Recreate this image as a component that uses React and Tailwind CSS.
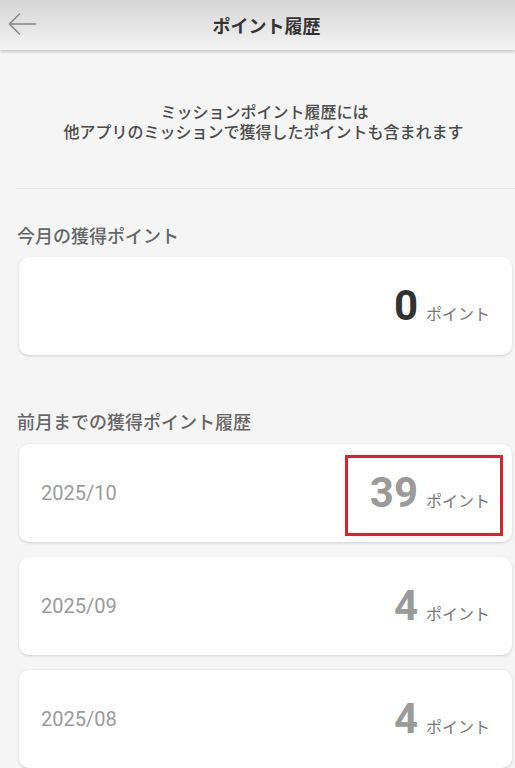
import React from "react";

const history = [
  { month: "2025/10", points: 39, marked: true },
  { month: "2025/09", points: 4 },
  { month: "2025/08", points: 4 },
];

const jp = "font-['Noto_Sans_CJK_JP','Noto_Sans',sans-serif]";
const num = "font-['Roboto','Liberation_Sans',sans-serif]";

// Points value + unit, number centred, unit on its baseline
const Points = ({ value, dark }) => (
  <div className="flex items-baseline">
    <span className={`${num} text-[42px] font-bold leading-none ${dark ? "text-[#333]" : "text-[#9a9a9a]"}`}>
      {value}
    </span>
    <span className={`${jp} ml-2 text-[16px] text-[#777]`}>ポイント</span>
  </div>
);

export default function App() {
  return (
    <div className={`min-h-screen bg-[#f5f5f5] ${jp} overflow-hidden`}>
      {/* Header */}
      <header className="relative h-[50px] flex items-center justify-center bg-gradient-to-b from-[#d6d6d6] to-[#f3f3f3] shadow-[0_2px_3px_rgba(0,0,0,0.18)]">
        <button className="absolute left-[8px] top-[12px] text-[#8a8a8a]">
          <svg width="29" height="24" viewBox="0 0 29 24" fill="none" stroke="currentColor" strokeWidth="1.6">
            <path d="M28 12H2" />
            <path d="M12 1.5L1.5 12L12 22.5" />
          </svg>
        </button>
        <h1 className="text-[18px] font-bold text-[#333] ml-[18px]">ポイント履歴</h1>
      </header>

      {/* Notice */}
      <div className="pt-[51px] pb-[47px] text-center text-[16px] leading-[20px] font-medium text-[#4a4a4a]">
        <p className="pl-[14px]">ミッションポイント履歴には</p>
        <p className="pl-[12px]">他アプリのミッションで獲得したポイントも含まれます</p>
      </div>
      <div className="ml-4 h-px bg-[#e4e4e4]" />

      {/* This month */}
      <h2 className="mt-[34px] ml-[17px] text-[18px] leading-[24px] font-medium text-[#666]">今月の獲得ポイント</h2>
      <div className="mt-[10px] ml-[19px] mr-[3px] h-[98px] rounded-[10px] bg-white shadow-[0_1px_3px_rgba(0,0,0,0.16)] flex items-center justify-end pr-[22px]">
        <Points value={0} dark />
      </div>

      {/* History */}
      <h2 className="mt-[54px] ml-[17px] text-[18px] leading-[24px] font-medium text-[#666]">前月までの獲得ポイント履歴</h2>
      <ul className="mt-[11px] ml-[19px] mr-[3px] flex flex-col gap-[15px]">
        {history.map((h) => (
          <li
            key={h.month}
            className="relative h-[98px] rounded-[10px] bg-white shadow-[0_1px_3px_rgba(0,0,0,0.16)] flex items-center justify-between pl-[22px] pr-[22px]"
          >
            <span className={`${num} text-[20px] text-[#9a9a9a]`}>{h.month}</span>
            <Points value={h.points} />
            {h.marked && (
              <div className="absolute left-[326px] top-[11px] w-[158px] h-[81px] border-[3px] border-[#d6242a]" />
            )}
          </li>
        ))}
      </ul>
    </div>
  );
}
